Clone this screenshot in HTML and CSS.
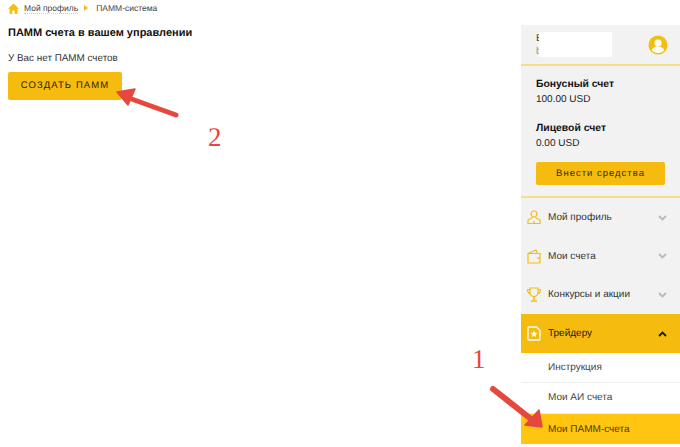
FILE: index.html
```html
<!DOCTYPE html>
<html lang="ru">
<head>
  <meta charset="UTF-8" />
  <title>ПАММ-система</title>
  <link rel="stylesheet" href="styles.css">
</head>
<body>

<div class="page">
  <main class="content">
    <div class="crumbs">
      <svg class="crumb-home" width="11" height="11" viewBox="0 0 11 11"><path d="M5.500 .5 11 5.800H9.400V11H6.700V7.400H4.300V11H1.600V5.800H0Z" fill="#f5bd10"/></svg>
      <a class="crumb-link" href="#">Мой профиль</a>
      <span class="crumb-sep"></span>
      <span>ПАММ-система</span>
    </div>
    <h1>ПАММ счета в вашем управлении</h1>
    <p class="empty">У Вас нет ПАММ счетов</p>
    <a class="btn-create" href="#">СОЗДАТЬ ПАММ</a>
  </main>

  <aside class="sidebar">
    <div class="user">
      <div class="user-name">
        <span>В</span>
        <span class="user-mail">b</span>
        <div class="user-mask"></div>
      </div>
      <svg width="20" height="20" viewBox="0 0 20 20"><circle cx="10" cy="10" r="9.500" fill="#f5bd10"/><circle cx="10" cy="8" r="3.600" fill="#fff"/><path d="M3.800 15.600c.6-2.600 3-3.600 4.600-4h3.200c1.600.4 4 1.400 4.600 4-1.400 1.500-3.600 2.500-6.200 2.500s-4.800-1-6.200-2.500Z" fill="#fff"/></svg>
    </div>
    <div class="balance">
      <div class="balance-item">
        <b>Бонусный счет</b>
        <span>100.00 USD</span>
      </div>
      <div class="balance-item">
        <b>Лицевой счет</b>
        <span>0.00 USD</span>
      </div>
      <a class="btn-fund" href="#">Внести средства</a>
    </div>
    <ul class="menu">
      <li class="menu-item">
        <svg width="14" height="15" viewBox="0 0 14 15" fill="none" stroke="#f5bd10" stroke-width="1.200"><circle cx="7" cy="4" r="3"/><path d="M5.500 7.500 1 10v3.500h12V10L8.500 7.500M7 11v2.500"/></svg>
        <span>Мой профиль</span>
        <svg class="chev" width="9" height="6" viewBox="0 0 9 6"><path d="M1 1l3.500 3.500L8 1" fill="none" stroke="#b9b9b9" stroke-width="1.800"/></svg>
      </li>
      <li class="menu-item">
        <svg width="14" height="15" viewBox="0 0 14 15" fill="none" stroke="#f5bd10" stroke-width="1.200"><path d="M1 4.500h12v9.500H1zM1 4.500 9 1l1.500 3.500"/><path d="M10 9h3"/></svg>
        <span>Мои счета</span>
        <svg class="chev" width="9" height="6" viewBox="0 0 9 6"><path d="M1 1l3.500 3.500L8 1" fill="none" stroke="#b9b9b9" stroke-width="1.800"/></svg>
      </li>
      <li class="menu-item">
        <svg width="14" height="15" viewBox="0 0 14 15" fill="none" stroke="#f5bd10" stroke-width="1.200"><path d="M3 1h8v4.500a4 4 0 0 1-8 0zM3 2.500H.6c0 2.500 1 4 2.800 4.500M11 2.500h2.400c0 2.500-1 4-2.800 4.500"/><path d="M7 9.500v3.500M4 14h6" stroke-width="1.600"/></svg>
        <span>Конкурсы и акции</span>
        <svg class="chev" width="9" height="6" viewBox="0 0 9 6"><path d="M1 1l3.500 3.500L8 1" fill="none" stroke="#b9b9b9" stroke-width="1.800"/></svg>
      </li>
      <li class="menu-item menu-open">
        <svg width="14" height="15" viewBox="0 0 14 15"><path d="M2 1h7.500L13 4.500V13a1 1 0 0 1-1 1H2a1 1 0 0 1-1-1V2a1 1 0 0 1 1-1Z" fill="none" stroke="#fff" stroke-width="1.300"/><path d="M7 4.500l1 2.200 2.400.2-1.800 1.600.5 2.400L7 9.700l-2.100 1.200.5-2.400-1.800-1.600 2.400-.2Z" fill="#fff"/></svg>
        <span>Трейдеру</span>
        <svg class="chev" width="9" height="6" viewBox="0 0 9 6"><path d="M1 5l3.500-3.500L8 5" fill="none" stroke="#1a1a1a" stroke-width="1.800"/></svg>
      </li>
      <li class="sub-item">Инструкция</li>
      <li class="sub-item">Мои АИ счета</li>
      <li class="sub-item sub-active">Мои ПАММ-счета</li>
    </ul>
  </aside>
</div>

<!-- пометки поверх скриншота -->
<svg class="marks" width="680" height="447" viewBox="0 0 680 447">
  <g fill="#e5483f" stroke="#e5483f">
    <path d="M126 97 176 115" stroke-width="5" stroke-linecap="round"/>
    <path d="M117 92 135 89 128 105Z" stroke-width="1.500" stroke-linejoin="round"/>
    <path d="M493 389 531 419" stroke-width="6" stroke-linecap="round"/>
    <path d="M542 427 525 425 539 410Z" stroke-width="1.500" stroke-linejoin="round"/>
  </g>
</svg>
<span class="mark mark-two">2</span>
<span class="mark mark-one">1</span>

</body>
</html>
```

FILE: styles.css
```css
* {
  margin: 0; padding: 0; box-sizing: border-box;
}
body {
  background: #fff;
  color: #222;
  font-family: 'Liberation Sans', Arial, sans-serif;
  font-size: 11px;
  text-rendering: geometricPrecision;
  width: 680px;
  height: 447px;
  overflow: hidden;
  position: relative;
}
a {
  color: inherit;
  text-decoration: none;
}

.page {
  display: flex;
  justify-content: space-between;
  align-items: flex-start;
}

.content {
  padding: 2px 0 0 8px;
}
.crumbs {
  display: flex;
  align-items: center;
  height: 12px;
  color: #444;
  font-size: 8.500px;
}
.crumb-home {
  margin-right: 5px;
}
.crumb-link {
  border-bottom: 1px dotted #e8cf80;
}
.crumb-sep {
  width: 0;
  height: 0;
  margin: 0 8px 0 6px;
  border-left: 4px solid #f5bd10;
  border-top: 3px solid transparent;
  border-bottom: 3px solid transparent;
}
h1 {
  margin-top: 12px;
  font-size: 11px;
  line-height: 14px;
  color: #111;
}
.empty {
  margin-top: 12px;
  font-size: 9.900px;
  line-height: 14px;
  color: #333;
}
.btn-create {
  display: block;
  width: 114px;
  height: 28px;
  margin-top: 6px;
  background: #f5bb0f;
  border-radius: 2px;
  color: #2b2200;
  font-size: 9.500px;
  letter-spacing: 1.100px;
  line-height: 28px;
  text-align: center;
}

.sidebar {
  width: 159px;
  margin-top: 25px;
}
.user {
  position: relative;
  display: flex;
  justify-content: space-between;
  align-items: center;
  height: 41px;
  padding: 0 12px 0 15px;
  background: #f2f2f2;
  border-bottom: 2px solid #f8dc8b;
}
.user-name {
  display: flex;
  flex-direction: column;
  font-size: 10px;
  line-height: 13px;
  color: #444;
}
.user-mail {
  color: #999;
}
.user-mask {
  position: absolute;
  left: 18px;
  top: 7px;
  width: 73px;
  height: 25px;
  background: #fff;
}
.balance {
  height: 132px;
  padding: 12px 15px 0;
  background: #f2f2f2;
  border-bottom: 2px solid #f8dc8b;
}
.balance-item {
  display: flex;
  flex-direction: column;
  gap: 2px;
  margin-bottom: 16px;
  font-size: 10px;
  line-height: 13px;
  color: #222;
}
.balance-item b {
  font-size: 10.400px;
  color: #111;
}
.balance-item:nth-child(2) {
  margin-bottom: 12px;
}
.btn-fund {
  display: block;
  width: 129px;
  height: 23px;
  background: #f5bb0f;
  border-radius: 2px;
  color: #3a2f00;
  font-size: 9.500px;
  letter-spacing: 1px;
  line-height: 23px;
  text-align: center;
}

.menu {
  list-style: none;
}
.menu-item {
  display: flex;
  align-items: center;
  height: 38.500px;
  padding: 1px 0 0 6px;
  background: #f2f2f2;
  font-size: 10px;
  color: #333;
}
.menu-item span {
  flex-grow: 1;
  margin-left: 7px;
}
.chev {
  margin-right: 13px;
}
.menu-open {
  height: 39px;
  background: #f5bb0f;
  color: #222;
}
.sub-item {
  height: 30.500px;
  padding-left: 27px;
  border-bottom: 1px solid #eee;
  font-size: 10px;
  line-height: 30px;
  color: #444;
}
.sub-active {
  background: #ffc510;
  border-bottom: 0;
  line-height: 32px;
  color: #4a3a00;
}

.marks {
  position: absolute;
  left: 0;
  top: 0;
}
.mark {
  position: absolute;
  color: #e8463c;
  font-family: 'Liberation Serif', serif;
  font-size: 27px;
  line-height: 30px;
}
.mark-two {
  left: 208px;
  top: 122px;
}
.mark-one {
  left: 472px;
  top: 344px;
}
```
